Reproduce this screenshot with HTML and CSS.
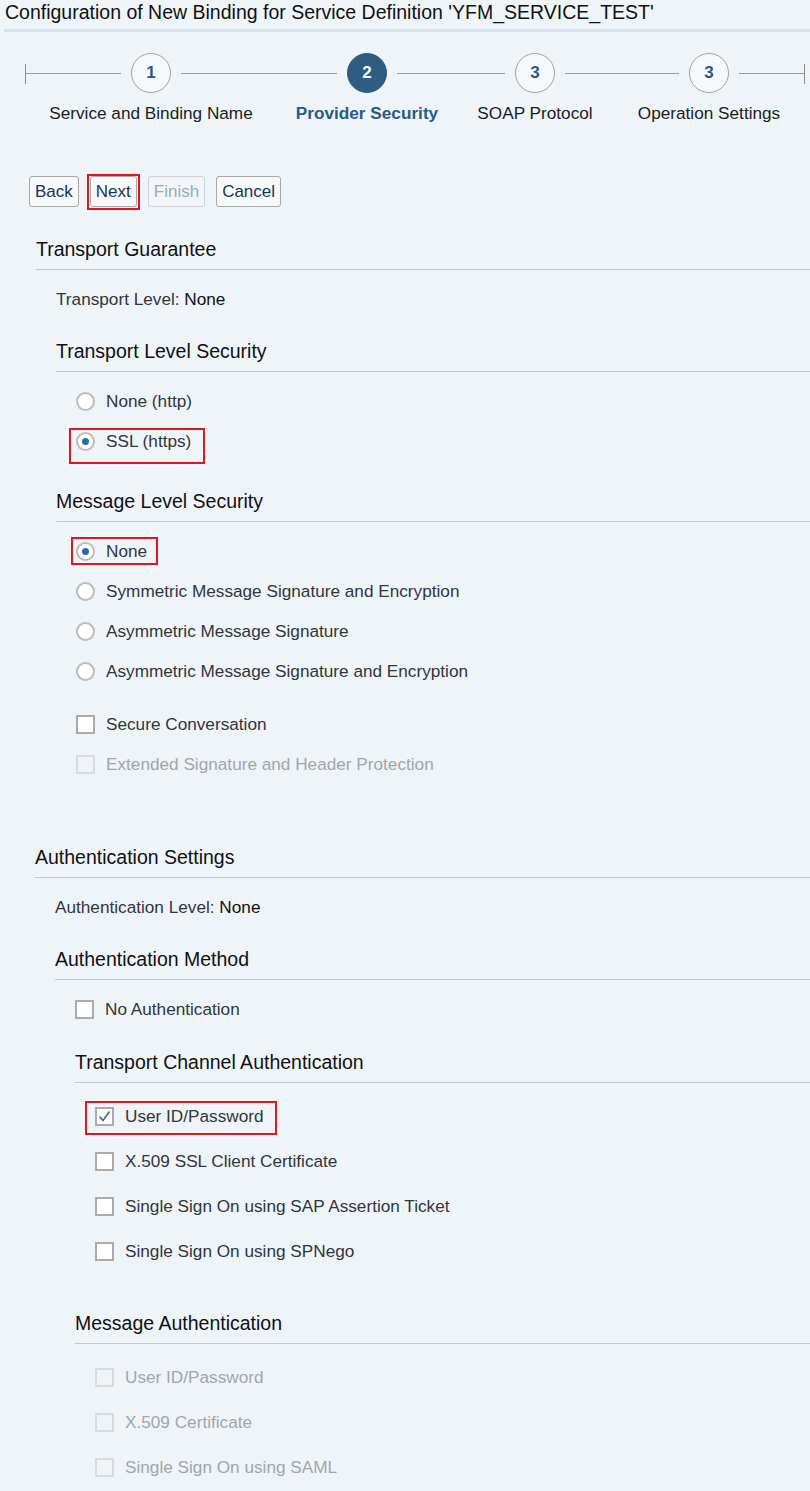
FILE: index.html
```html
<!DOCTYPE html>
<html>
<head>
<meta charset="utf-8">
<title>Configuration of New Binding</title>
<link rel="stylesheet" href="styles.css">
</head>
<body>
<div class="title">Configuration of New Binding for Service Definition 'YFM_SERVICE_TEST'</div>

<div class="steps">
  <span class="tick"></span>
  <span class="line l1"></span>
  <div class="step"><div class="circle">1</div><div class="slabel">Service and Binding Name</div></div>
  <span class="line l2"></span>
  <div class="step active"><div class="circle">2</div><div class="slabel">Provider Security</div></div>
  <span class="line l3"></span>
  <div class="step"><div class="circle">3</div><div class="slabel">SOAP Protocol</div></div>
  <span class="line l4"></span>
  <div class="step"><div class="circle">3</div><div class="slabel">Operation Settings</div></div>
  <span class="line l5"></span>
  <span class="tick"></span>
</div>

<div class="buttons">
  <button class="btn">Back</button>
  <button class="btn marked">Next</button>
  <button class="btn disabled">Finish</button>
  <button class="btn">Cancel</button>
</div>

<div class="sec sec1">
  <div class="h h-top">Transport Guarantee</div>
  <div class="sub">
    <div class="level">Transport Level: <span class="val">None</span></div>

    <div class="h h-gap">Transport Level Security</div>
    <div class="opts">
      <div class="opt r"><span class="radio"></span><span class="txt">None (http)</span></div>
      <div class="opt r"><span class="radio on"></span><span class="txt">SSL (https)</span><span class="hl hl-ssl"></span></div>
    </div>

    <div class="h h-gap">Message Level Security</div>
    <div class="opts">
      <div class="opt r"><span class="radio on"></span><span class="txt">None</span><span class="hl hl-none"></span></div>
      <div class="opt r"><span class="radio"></span><span class="txt">Symmetric Message Signature and Encryption</span></div>
      <div class="opt r"><span class="radio"></span><span class="txt">Asymmetric Message Signature</span></div>
      <div class="opt r"><span class="radio"></span><span class="txt">Asymmetric Message Signature and Encryption</span></div>
    </div>
    <div class="opts cbs">
      <div class="opt r"><span class="cb"></span><span class="txt">Secure Conversation</span></div>
      <div class="opt r dis"><span class="cb"></span><span class="txt">Extended Signature and Header Protection</span></div>
    </div>
  </div>
</div>

<div class="sec sec2">
  <div class="h">Authentication Settings</div>
  <div class="sub">
    <div class="level">Authentication Level: <span class="val">None</span></div>

    <div class="h h-gap">Authentication Method</div>
    <div class="opts">
      <div class="opt r"><span class="cb"></span><span class="txt">No Authentication</span></div>
    </div>
    <div class="sub">
      <div class="h h-tca">Transport Channel Authentication</div>
      <div class="opts tall">
        <div class="opt c"><span class="cb on"><svg viewBox="0 0 19 19" width="19" height="19"><path d="M4.5 9.5 L8 13.5 L14.5 4.5" fill="none" stroke="#2b6aa6" stroke-width="1.6"/></svg></span><span class="txt">User ID/Password</span><span class="hl hl-user"></span></div>
        <div class="opt c"><span class="cb"></span><span class="txt">X.509 SSL Client Certificate</span></div>
        <div class="opt c"><span class="cb"></span><span class="txt">Single Sign On using SAP Assertion Ticket</span></div>
        <div class="opt c"><span class="cb"></span><span class="txt">Single Sign On using SPNego</span></div>
      </div>
      <div class="h h-ma">Message Authentication</div>
      <div class="opts tall">
        <div class="opt c dis"><span class="cb"></span><span class="txt">User ID/Password</span></div>
        <div class="opt c dis"><span class="cb"></span><span class="txt">X.509 Certificate</span></div>
        <div class="opt c dis"><span class="cb"></span><span class="txt">Single Sign On using SAML</span></div>
      </div>
    </div>
  </div>
</div>
</body>
</html>
```

FILE: styles.css
```css
* { box-sizing: border-box; }
html, body { margin: 0; padding: 0; }
body {
  background: #eff4f9;
  font-family: "Liberation Sans", Arial, sans-serif;
  color: #32363a;
  width: 810px;
  overflow: hidden;
}

.title {
  margin-left: 4px;
  padding-left: 1px;
  height: 32px;
  line-height: 24px;
  font-size: 19.5px;
  color: #111;
  border-bottom: 3px solid #d6e1ec;
  white-space: nowrap;
}

/* steps */
.steps {
  display: flex;
  align-items: flex-start;
  padding-left: 25px;
  margin-top: 21px;
  height: 123px;
}
.tick {
  width: 1px;
  height: 20px;
  margin-top: 11px;
  background: #8c8c8c;
  flex: none;
}
.line {
  height: 1px;
  margin: 20px 10px 0;
  background: #9c9c9c;
  flex: none;
}
.line.l1 { width: 95px; margin-left: 0; }
.line.l2 { width: 156px; }
.line.l3 { width: 108px; }
.line.l4 { width: 114px; }
.line.l5 { width: 65px; margin-right: 0; }
.step {
  width: 40px;
  flex: none;
  display: flex;
  flex-direction: column;
  align-items: center;
}
.circle {
  width: 40px;
  height: 40px;
  border-radius: 50%;
  border: 1px solid #a3a3a3;
  background: #f6f8fa;
  color: #2b5a80;
  font-weight: bold;
  font-size: 17px;
  display: flex;
  align-items: center;
  justify-content: center;
}
.slabel {
  margin-top: 10px;
  white-space: nowrap;
  font-size: 17.2px;
  line-height: 20px;
  color: #1c1c1c;
}
.step.active .circle {
  background: #2f5d82;
  border-color: #2f5d82;
  color: #fff;
}
.step.active .slabel {
  font-weight: bold;
  color: #2b5a80;
}

/* buttons */
.buttons {
  display: flex;
  gap: 11px;
  padding-left: 29px;
}
.btn {
  position: relative;
  height: 31px;
  padding: 0 5px;
  font-family: "Liberation Sans", Arial, sans-serif;
  font-size: 17px;
  color: #15355a;
  background: #f7f8f9;
  border: 1px solid #a8a8a8;
  border-radius: 3px;
}
.btn.marked::after {
  content: "";
  position: absolute;
  left: -4px;
  top: -3px;
  right: -4px;
  bottom: -4px;
  border: 2px solid #e3151c;
}
.btn.disabled {
  color: #98abbe;
  border-color: #cdd3d9;
  background: #f3f5f7;
}

/* sections */
.sec { padding-left: 36px; }
.sec2 { padding-left: 35px; margin-top: 61px; }
.sub { padding-left: 20px; }
.h {
  font-size: 19.5px;
  line-height: 24px;
  color: #111;
  padding-bottom: 8px;
  border-bottom: 1px solid #c2c7cc;
}
.h-top { margin-top: 30px; }
.h-gap { margin-top: 28px; }
.h-tca { margin-top: 21px; }
.h-ma { margin-top: 37px; }
.level {
  margin-top: 17px;
  font-size: 17.2px;
  line-height: 24px;
}
.level .val { color: #111; }

.opts { margin-top: 9px; padding-left: 20px; }
.opts.cbs { margin-top: 13px; }
.opts.tall { margin-top: 11px; }
.opt {
  position: relative;
  display: flex;
  align-items: center;
  height: 40px;
  font-size: 17.2px;
}
.opt.c { height: 45px; }
.txt { margin-left: 11px; white-space: nowrap; }

.radio {
  width: 19px;
  height: 19px;
  border-radius: 50%;
  border: 2px solid #bdbdbd;
  background: #fff;
  flex: none;
  display: flex;
  align-items: center;
  justify-content: center;
}
.radio.on::after {
  content: "";
  width: 7px;
  height: 7px;
  border-radius: 50%;
  background: #2c6aa7;
}
.cb {
  width: 19px;
  height: 19px;
  border: 2px solid #ababab;
  background: #fff;
  flex: none;
  position: relative;
}
.cb svg { position: absolute; left: -2px; top: -2px; }
.dis .txt { color: #a2a6aa; }
.dis .cb { border-color: #d9dcdf; background: transparent; }

.hl {
  position: absolute;
  border: 2px solid #e3151c;
  pointer-events: none;
}
.hl-ssl { left: -7px; top: 7px; width: 136px; height: 36px; }
.hl-none { left: -5px; top: 6px; width: 87px; height: 28px; }
.hl-user { left: -10px; top: 7px; width: 192px; height: 34px; }
```
